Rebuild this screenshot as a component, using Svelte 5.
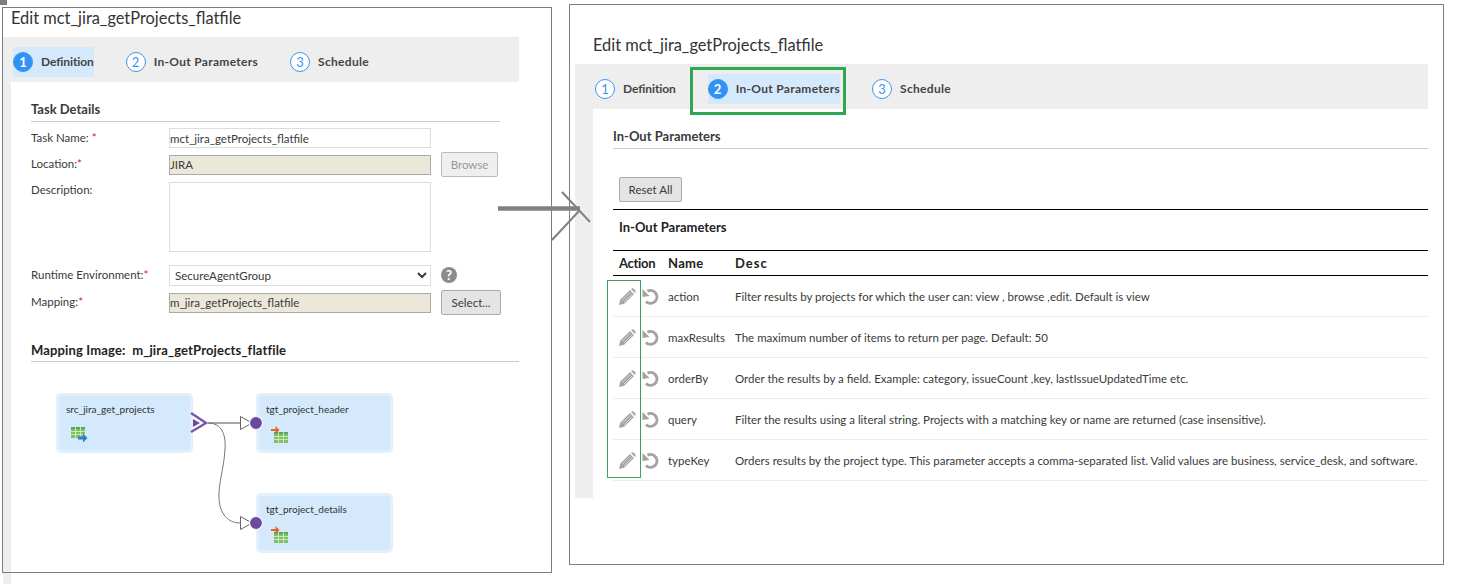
<script>
	const steps = ['Definition', 'In-Out Parameters', 'Schedule'];

	const params = [
		{ name: 'action', desc: 'Filter results by projects for which the user can: view , browse ,edit. Default is view' },
		{ name: 'maxResults', desc: 'The maximum number of items to return per page. Default: 50' },
		{ name: 'orderBy', desc: 'Order the results by a field. Example: category, issueCount ,key, lastIssueUpdatedTime etc.' },
		{ name: 'query', desc: 'Filter the results using a literal string. Projects with a matching key or name are returned (case insensitive).' },
		{ name: 'typeKey', desc: 'Orders results by the project type. This parameter accepts a comma-separated list. Valid values are business, service_desk, and software.' }
	];

	const nodes = [
		{ name: 'src_jira_get_projects', x: 25, y: 31, kind: 'src' },
		{ name: 'tgt_project_header', x: 225, y: 31, kind: 'tgt' },
		{ name: 'tgt_project_details', x: 225, y: 131, kind: 'tgt' }
	];
</script>

{#snippet stepper(active)}
	<div class="tabs">
		{#each steps as step, i}
			<div class="tab" class:on={i === active}>
				<span class="num">{i + 1}</span>
				<span class="tab-label">{step}</span>
			</div>
		{/each}
	</div>
{/snippet}

{#snippet grid(x, y)}
	<rect x={x} y={y} width="14" height="11" fill="#7cc06a" />
	<rect x={x} y={y} width="14" height="2" fill="#55a85a" />
	<path d="M{x} {y + 4.5}h14M{x} {y + 7.5}h14M{x + 4.5} {y}v11M{x + 9.5} {y}v11" stroke="#dff0c4" stroke-width="0.8" />
{/snippet}

<div class="page">
	<span class="corner"></span>

	<section class="shot left">
		<h1>Edit mct_jira_getProjects_flatfile</h1>
		{@render stepper(0)}
		<div class="body">
			<h3>Task Details</h3>
			<div class="row r1">
				<label for="task">Task Name: <em>*</em></label>
				<input id="task" value="mct_jira_getProjects_flatfile" />
			</div>
			<div class="row r2">
				<label for="loc">Location:<em>*</em></label>
				<input id="loc" class="ro" readonly value="JIRA" />
				<button class="btn off">Browse</button>
			</div>
			<div class="row r3">
				<label for="desc">Description:</label>
				<textarea id="desc"></textarea>
			</div>
			<div class="row r4">
				<label for="env">Runtime Environment:<em>*</em></label>
				<select id="env"><option>SecureAgentGroup</option></select>
				<svg class="help" width="16" height="16" viewBox="0 0 16 16">
					<circle cx="8" cy="8" r="8" fill="#8c8c8c" />
					<text x="8" y="12.5" text-anchor="middle" class="help-q">?</text>
				</svg>
			</div>
			<div class="row r5">
				<label for="map">Mapping:<em>*</em></label>
				<input id="map" class="ro" readonly value="m_jira_getProjects_flatfile" />
				<button class="btn wide">Select...</button>
			</div>
			<h3 class="map-title">Mapping Image:&nbsp; m_jira_getProjects_flatfile</h3>

			<div class="canvas">
				{#each nodes as n}
					<div class="node" style="left:{n.x}px;top:{n.y}px">
						<span>{n.name}</span>
						<svg class="ico" width="22" height="18" viewBox="0 0 22 18">
							{#if n.kind === 'src'}
								{@render grid(1, 1)}
								<path d="M8 10.5h5v-3l4.500 4.500l-4.500 4.500v-3h-5z" fill="#2f7fc9" />
							{:else}
								{@render grid(4, 6)}
								<path d="M1 3h4.500v-3l4 4l-4 4v-3h-4.500z" fill="#e0662a" />
							{/if}
						</svg>
					</div>
				{/each}
				<svg class="wires" width="488" height="200" viewBox="31 363 488 200">
					<path d="M208 424H240" stroke="#8a8a8a" stroke-width="1.500" fill="none" />
					<path d="M208 424C222 424 226 436 225 450C224 470 218 485 219 500C220 515 228 524 240 524" stroke="#777" fill="none" />
					<path d="M191 414L206 424L191 433" stroke="#7a5aa6" stroke-width="2.500" fill="none" />
					<path d="M193 420L200 424L193 428z" fill="#6b4a9e" />
					{#each [424, 524] as y}
						<path d="M240.500 {y - 6.500}L252 {y}L240.500 {y + 6.500}z" fill="#fff" stroke="#666" />
						<circle cx="256" cy={y} r="6.500" fill="#6b4a9e" stroke="#f4f8fc" stroke-width="1.200" />
					{/each}
				</svg>
			</div>
		</div>
	</section>

	<section class="shot right">
		<h1>Edit mct_jira_getProjects_flatfile</h1>
		{@render stepper(1)}
		<span class="step-mark"></span>
		<div class="body">
			<h3 class="params-title">In-Out Parameters</h3>
			<button class="btn reset">Reset All</button>
			<h4>In-Out Parameters</h4>
			<div class="table-wrap">
				<table>
					<thead>
						<tr><th>Action</th><th>Name</th><th>Desc</th></tr>
					</thead>
					<tbody>
						{#each params as p}
							<tr>
								<td class="actions">
									<svg width="18" height="18" viewBox="0 0 18 18">
										<path d="M1 17L2.200 11.800L12 2L16 6L6.200 15.800z" fill="#a3a3a3" />
										<path d="M13 1L14 0.500Q15 0 16 1L17 2Q18 3 17.500 4L17 5z" fill="#a3a3a3" />
										<path d="M4 12.500L12.500 4M6 14L14.500 5.500M11.800 1.200L16.800 6.200" stroke="#fff" stroke-width="0.600" />
									</svg>
									<svg width="18" height="18" viewBox="0 0 18 18">
										<path d="M5.500 3.300A6.400 6.400 0 1 1 4 13.500" stroke="#a3a3a3" stroke-width="3" fill="none" />
										<path d="M0.500 1L0.500 9L7.500 8z" fill="#a3a3a3" />
									</svg>
								</td>
								<td>{p.name}</td>
								<td>{p.desc}</td>
							</tr>
						{/each}
					</tbody>
				</table>
				<span class="col-mark"></span>
			</div>
		</div>
	</section>

	<svg class="arrow" width="100" height="60" viewBox="0 0 100 60">
		<path d="M0 18.500H82" stroke="#808080" stroke-width="4.500" />
		<path d="M64 2L92 32M54 50L82 20" stroke="#808080" stroke-width="2" fill="none" />
	</svg>
</div>

<style>
	:global(body) {
		margin: 0;
		background: #fff;
	}
	.page {
		position: relative;
		display: flex;
		align-items: flex-start;
		gap: 17px;
		width: 1461px;
		height: 584px;
		overflow: hidden;
		font-family: Lato, "Open Sans", sans-serif;
		font-size: 11.5px;
		color: #3a3a3a;
	}
	.corner {
		position: absolute;
		left: 0;
		top: 0;
		width: 7px;
		height: 5px;
		background: #7d7d7d;
	}
	.shot {
		position: relative;
		box-sizing: border-box;
		flex: none;
	}
	/* frame sits over the grey strip, which runs past the bottom edge on the left shot */
	.shot::after {
		content: "";
		position: absolute;
		inset: 0;
		border: 1px solid #7d7d7d;
		pointer-events: none;
	}
	.left {
		width: 550px;
		height: 566px;
		margin: 7px 0 0 2px;
		padding: 0 33px 0 1px;
	}
	.right {
		width: 875px;
		height: 561px;
		margin-top: 4px;
		padding: 0 16px 0 6px;
	}
	h1 {
		margin: 0;
		font-size: 16.4px;
		font-weight: 400;
		color: #333;
	}
	.left h1 {
		height: 30px;
		padding-left: 8px;
		line-height: 21px;
	}
	.right h1 {
		height: 60px;
		padding: 30px 0 0 18px;
		box-sizing: border-box;
		line-height: 22px;
	}
	.tabs {
		box-sizing: border-box;
		display: flex;
		gap: 32px;
		height: 45px;
		padding: 10px 0 0 10px;
		background: #eee;
	}
	.right .tabs {
		padding-left: 20px;
	}
	.tab {
		display: flex;
		align-items: center;
		gap: 8px;
		height: 30px;
		font-size: 12px;
		font-weight: 700;
		color: #444;
		letter-spacing: 0.3px;
	}
	.tab:first-child {
		letter-spacing: -0.1px;
	}
	.tab-label {
		margin-bottom: 1px;
	}
	.tab.on {
		background: #d4e9fb;
	}
	.num {
		box-sizing: border-box;
		display: flex;
		align-items: center;
		justify-content: center;
		width: 20px;
		height: 20px;
		border: 1px solid #3a96ee;
		border-radius: 50%;
		background: #fff;
		font-weight: 400;
		font-size: 13px;
		color: #3a96ee;
	}
	.on .num {
		background: #2f93f5;
		color: #fff;
		font-weight: 700;
	}
	.step-mark {
		position: absolute;
		left: 121px;
		top: 63px;
		width: 150px;
		height: 42px;
		border: 3px solid #2fa750;
	}
	.body {
		box-sizing: border-box;
		border-left: 8px solid #eee;
		padding-left: 20px;
		height: 502px;
	}
	.right .body {
		border-left-width: 18px;
		height: 389px;
	}
	h3 {
		box-sizing: border-box;
		width: 469px;
		height: 40px;
		margin: 0;
		padding-top: 18px;
		border-bottom: 1px solid #ccc;
		font-size: 13px;
		font-weight: 700;
		line-height: 18px;
		color: #3a3a3a;
	}
	.row {
		display: flex;
		align-items: center;
	}
	.row label {
		flex: none;
		width: 138px;
		margin-top: -2px;
	}
	em {
		font-style: normal;
		color: #d22;
	}
	input, textarea, select {
		box-sizing: border-box;
		flex: none;
		width: 262px;
		height: 20px;
		padding: 0;
		border: 1px solid #ddd;
		border-radius: 0;
		background: #fff;
		font: inherit;
		color: #3a3a3a;
		outline: none;
	}
	.ro {
		border-color: #aaa;
		background: #ebe8da;
	}
	select {
		height: 21px;
		padding-left: 1px;
	}
	textarea {
		height: 70px;
		resize: none;
	}
	.r1 { margin-top: 6px; height: 20px; }
	.r2 { margin-top: 4px; height: 25px; }
	.r3 { margin-top: 5px; height: 70px; align-items: flex-start; }
	.r3 label { margin-top: 0; padding-top: 1px; }
	.r4 { margin-top: 12px; height: 22px; }
	.r5 { margin-top: 4px; height: 25px; }
	.btn {
		box-sizing: border-box;
		height: 25px;
		padding: 0;
		border: 1px solid #aaa;
		border-radius: 2px;
		background: #e4e4e4;
		font: inherit;
		color: #3a3a3a;
	}
	.row .btn {
		width: 57px;
		margin-left: 10px;
	}
	.row .wide {
		width: 60px;
	}
	.off {
		border-color: #bbb;
		background: #efefef;
		color: #999;
	}
	.help {
		margin-left: 10px;
	}
	.help-q {
		font-size: 13px;
		font-weight: 900;
		fill: #fff;
	}
	.map-title {
		width: 488px;
		height: 47px;
		padding-top: 26px;
		letter-spacing: 0.15px;
		color: #222;
	}
	.canvas {
		position: relative;
		height: 200px;
	}
	.node {
		position: absolute;
		box-sizing: border-box;
		width: 137px;
		height: 60px;
		padding: 7px 0 0 7px;
		border: 3px solid #e4f0f9;
		border-radius: 5px;
		background: #d4e9fb;
		font-size: 10px;
		line-height: 12px;
		color: #333;
	}
	.ico {
		display: block;
		margin: 11px 0 0 4px;
	}
	.wires {
		position: absolute;
		left: 0;
		top: 0;
	}
	.params-title {
		width: auto;
		height: 40px;
		padding-top: 18px;
	}
	.reset {
		display: block;
		width: 63px;
		margin: 28px 0 7px 6px;
	}
	h4 {
		box-sizing: border-box;
		height: 42px;
		margin: 0;
		padding: 9px 0 0 6px;
		border-top: 1px solid #000;
		border-bottom: 1px solid #000;
		font-size: 13px;
		font-weight: 700;
		line-height: 16px;
		color: #222;
	}
	.table-wrap {
		position: relative;
	}
	table {
		width: 100%;
		border-collapse: collapse;
		table-layout: fixed;
	}
	th {
		height: 24px;
		padding: 0;
		border-bottom: 1px solid #000;
		text-align: left;
		font-size: 13px;
		font-weight: 700;
		color: #222;
	}
	th:first-child {
		width: 55px;
		padding-left: 6px;
		box-sizing: border-box;
		letter-spacing: -0.3px;
	}
	th:nth-child(2) {
		width: 67px;
		letter-spacing: 0.3px;
	}
	th:nth-child(3) {
		letter-spacing: 1px;
	}
	td {
		height: 40px;
		padding: 0;
		border-bottom: 1px solid #eee;
		white-space: nowrap;
	}
	.actions svg {
		display: inline-block;
		vertical-align: middle;
		margin-top: 2px;
	}
	.actions svg:first-child {
		margin-right: 3px;
		margin-left: 5px;
	}
	.col-mark {
		position: absolute;
		left: -6px;
		top: 29px;
		box-sizing: border-box;
		width: 34px;
		height: 198px;
		border: 1px solid #3fa060;
		pointer-events: none;
	}
	.arrow {
		position: absolute;
		left: 498px;
		top: 190px;
	}
</style>
